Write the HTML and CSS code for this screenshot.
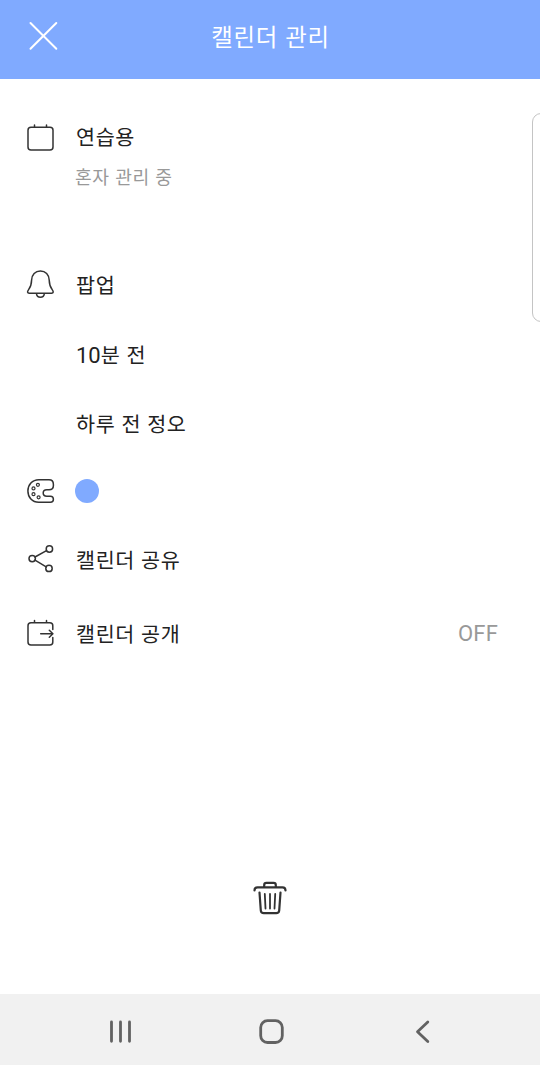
FILE: index.html
```html
<!DOCTYPE html>
<html lang="ko">

<head>
    <meta charset="UTF-8">
    <meta name="viewport" content="width=device-width, initial-scale=1.0">
    <title>캘린더 관리</title>
    <link rel="stylesheet" href="styles.css">
  </head>
  <body>
    <header class="header">
      <svg class="close" viewBox="0 0 32 32"><path d="M3.5 3 L29.3 28.8 M29.3 3 L3.5 28.8"/></svg>
      <h1 class="title">캘린더 관리</h1>
    </header>

    <main class="content">
      <div class="row row-name">
        <svg class="icon" viewBox="0 0 32 32"><rect x="4" y="6.3" width="25" height="22.6" rx="3"/><path d="M10.5 4 V6.3 M22.5 4 V6.3"/></svg>
        <span class="label">연습용</span>
      </div>
      <p class="sub">혼자 관리 중</p>

      <div class="row row-popup">
        <svg class="icon" viewBox="0 0 32 32"><path d="M16.4 1.9 C11.2 1.9 7.8 5.7 7.6 11 C7.5 15.5 6.8 17.8 4.6 20.6 C3 22.7 3.3 24.2 5.2 24.2 H27.6 C29.5 24.2 29.8 22.7 28.2 20.6 C26 17.8 25.3 15.5 25.2 11 C25 5.7 21.6 1.9 16.4 1.9 Z M12.4 24.4 C13 29.6 19.8 29.6 20.4 24.4"/></svg>
        <span class="label">팝업</span>
      </div>
      <div class="row row-minutes">
        <span class="label"><span class="num">10</span>분 전</span>
      </div>
      <div class="row row-day">
        <span class="label">하루 전 정오</span>
      </div>

      <div class="row row-color">
        <svg class="icon" viewBox="0 0 32 32"><path d="M14.8 4.7 H25 C27.8 4.7 29.4 6.8 29.4 9.4 V10.5 C29.4 13.3 27.5 14.8 25 14.8 H22.8 C18 14.8 18 21.2 22.8 21.2 H26.4 C30.4 21.2 30.4 27.3 26.4 27.3 H14.8 C8.2 27.3 3.9 22.3 3.9 16 C3.9 9.7 8.2 4.7 14.8 4.7 Z"/><g class="dots"><circle cx="13.9" cy="9.8" r="1.5"/><circle cx="9.5" cy="13.4" r="1.5"/><circle cx="9.5" cy="19.2" r="1.5"/><circle cx="14.6" cy="22.3" r="1.5"/></g></svg>
        <span class="color"></span>
      </div>
      <div class="row row-share">
        <svg class="icon" viewBox="0 0 32 32"><circle cx="8.2" cy="14.6" r="3.2"/><circle cx="25.4" cy="5" r="3.2"/><circle cx="25" cy="24.4" r="3.2"/><path d="M11 13 L22.5 6.7 M11 16.2 L22.2 22.8"/></svg>
        <span class="label">캘린더 공유</span>
      </div>
      <div class="row row-open">
        <svg class="icon" viewBox="0 0 32 32"><path d="M28.8 11.5 V7.8 Q28.8 4.8 25.8 4.8 H7 Q4 4.8 4 7.8 V23.9 Q4 26.9 7 26.9 H25.8 Q28.8 26.9 28.8 23.9 V19.5 M10.5 2.4 V4.8 M22.5 2.4 V4.8 M16.7 15.7 H28.8 M25.3 12.2 L28.9 15.7 L25.3 19.2"/></svg>
        <span class="label">캘린더 공개</span>
        <span class="state">OFF</span>
      </div>

      <div class="panel"></div>
    </main>

    <div class="delete">
      <svg class="trash" viewBox="0 0 40 40"><path d="M4.5 12.5 Q4.5 9.3 7.5 9.3 H32.5 Q35.5 9.3 35.5 12.5 M14.2 9 V7 Q14.2 4.9 16.4 4.9 H23.6 Q25.8 4.9 25.8 7 V9 M9.5 14.5 L10.8 32.5 Q11 35.2 13.8 35.2 H26.2 Q29 35.2 29.2 32.5 L30.5 14.5"/><path class="thin" d="M14.8 16 L15.5 30.5 M20 16 V30.5 M25.2 16 L24.5 30.5"/></svg>
    </div>

    <nav class="nav">
      <svg class="nav-icon" viewBox="0 0 32 32"><path d="M6.5 6 V25.3 M15.5 6 V25.3 M24.5 6 V25.3"/></svg>
      <svg class="nav-icon" viewBox="0 0 32 32"><rect x="4.7" y="4.7" width="21.6" height="21.8" rx="6.8"/></svg>
      <svg class="nav-icon" viewBox="0 0 32 32"><path d="M20.8 6 L10.5 15.7 L20.8 25.6"/></svg>
    </nav>
  </body>
</html>
```

FILE: styles.css
```css
* {
  box-sizing: border-box;
}
body {
  margin: 0;
  height: 1065px;
  display: flex;
  flex-direction: column;
  overflow: hidden;
  background-color: #fff;
  color: #222;
  font-family: Roboto, "Noto Sans CJK KR", sans-serif;
}
svg {
  fill: none;
  stroke: #333;
  stroke-linecap: round;
  stroke-linejoin: round;
  flex: none;
}
.header {
  height: 79px;
  padding: 0 27px 7px;
  display: grid;
  grid-template-columns: 32px 1fr 32px;
  align-items: center;
  background-color: #80aaff;
}
.close {
  width: 32px;
  height: 32px;
  stroke: #fff;
  stroke-width: 2;
}
.title {
  margin: 0;
  padding: 3px 0 0 1px;
  font-size: 23.4px;
  line-height: 36px;
  font-weight: 400;
  letter-spacing: 0.7px;
  word-spacing: 0.8px;
  text-align: center;
  color: #fff;
}
.content {
  position: relative;
  flex: 1;
  padding: 36px 42px 0 24px;
}
.row {
  display: grid;
  grid-template-columns: 32px 1fr auto;
  column-gap: 19px;
  align-items: center;
}
.row-name {
  height: 44px;
}
.row-popup {
  height: 70px;
}
.row-minutes {
  height: 70px;
}
.row-day {
  height: 68px;
}
.row-color {
  height: 66px;
}
.row-share {
  height: 71px;
}
.row-open {
  height: 78px;
}
.icon {
  width: 32px;
  height: 32px;
  stroke-width: 1.5;
}
.dots {
  stroke-width: 1.2;
}
.label {
  grid-column: 2;
  padding: 2px 0 0 1px;
  font-size: 20.7px;
  line-height: 32px;
  letter-spacing: 0.6px;
  word-spacing: 0.4px;
}
.num {
  font-size: 22px;
  line-height: 1;
  letter-spacing: 0;
}
.sub {
  margin: 0 0 53px 51px;
  height: 38px;
  font-size: 18.2px;
  line-height: 38px;
  letter-spacing: 0.5px;
  word-spacing: 0.7px;
  color: #999;
}
.color {
  width: 24px;
  height: 24px;
  border-radius: 50%;
  background-color: #80aaff;
}
.state {
  padding-bottom: 1px;
  font-size: 22px;
  letter-spacing: 0.2px;
  color: #999;
}
/* edge panel handle */
.panel {
  position: absolute;
  top: 34px;
  right: -12px;
  width: 20px;
  height: 209px;
  border: 1px solid #c4c4c4;
  border-radius: 9px;
}
.delete {
  height: 116px;
  display: flex;
  justify-content: center;
}
.trash {
  width: 40px;
  height: 40px;
  stroke-width: 2.2;
}
.trash .thin {
  stroke-width: 1.8;
}
.nav {
  height: 71px;
  padding: 5px 101px 0 105px;
  display: flex;
  justify-content: space-between;
  align-items: center;
  background-color: #f1f1f1;
}
.nav-icon {
  width: 32px;
  height: 32px;
  stroke: #626262;
  stroke-width: 2.8;
}
```
